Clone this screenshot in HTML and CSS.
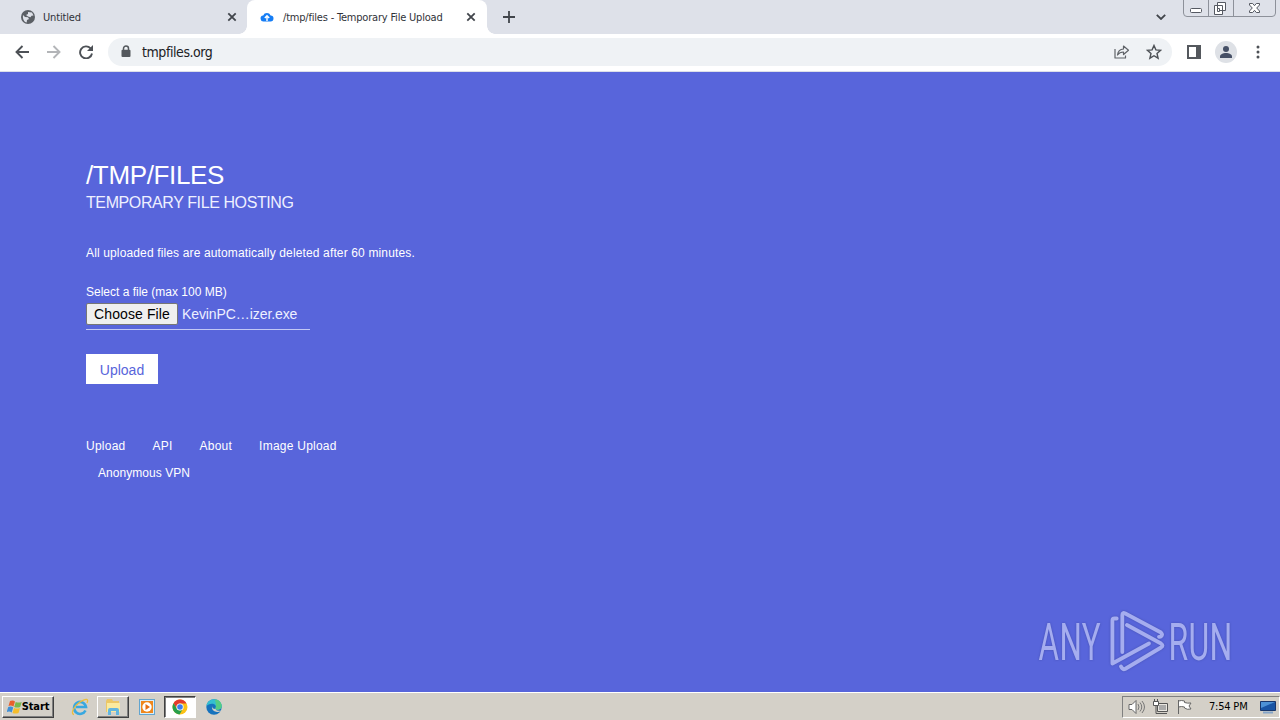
FILE: index.html
```html
<!doctype html>
<html lang="en">
<head>
	<meta charset="utf-8">
	<title>/tmp/files - Temporary File Upload</title>
	<link rel="stylesheet" href="styles.css">
</head>

<body>
	<div class="tabs">
		<div class="tab">
			<svg class="favicon" width="14" height="14" viewBox="0 0 14 14"><circle cx="7" cy="7" r="7" fill="#5b5f65"/><path d="M2 5l2 2 3 .3 1 1.7-2 1-.3 2.5C3 12 1.500 9 2 5zM7 2l4 .5 1.500 3-2 .2-1 1.500-2.500-.7L5 5l2-1z" fill="#dee1e9"/></svg>
			<span class="title title-untitled">Untitled</span>
			<svg class="close" width="10" height="10" viewBox="0 0 10 10"><path d="M1.300 1.300l7.400 7.400M8.700 1.300L1.300 8.700"/></svg>
		</div>
		<div class="tab active">
			<svg class="favicon" width="14" height="14" viewBox="0 0 14 14"><path d="M4 11.500a3 3 0 0 1-.8-6 4 4 0 0 1 7.400 0 3 3 0 0 1-.2 6z" fill="#157df5"/><path d="M7 11V6M4.800 8L7 5.800 9.200 8" fill="none" stroke="#fff" stroke-width="1.400"/></svg>
			<span class="title">/tmp/files - Temporary File Upload</span>
			<svg class="close" width="10" height="10" viewBox="0 0 10 10"><path d="M1.300 1.300l7.400 7.400M8.700 1.300L1.300 8.700"/></svg>
		</div>
		<svg class="plus" width="12" height="12" viewBox="0 0 12 12"><path d="M6 0v12M0 6h12"/></svg>
		<svg class="chevron" width="10" height="6" viewBox="0 0 10 6"><path d="M.8.800L5 5 9.200.8"/></svg>
		<svg class="controls" width="93" height="17" viewBox="0 0 93 17">
			<path d="M.5 0v13q0 3.500 3.500 3.500h85q3.500 0 3.500-3.500V0M25.500 0v16.500M50.500 0v16.500" fill="none" stroke="#8d919a"/>
			<g fill="#fff" stroke="#555962">
				<rect x="7.500" y="8.500" width="11" height="4" rx="1"/>
				<path d="M34.500 2.500h8v8h-8zM31.500 5.500h8v9h-8z"/>
				<path d="M34.500 8.500h2v3h-2z"/>
				<path d="M66.500 3.500h3.200l1.800 2.200 1.800-2.200h3.200v1.500L73.700 8l2.800 3v1.500h-3.200l-1.800-2.200-1.800 2.200h-3.200V11l2.800-3-2.800-3z"/>
			</g>
		</svg>
	</div>

	<div class="toolbar">
		<svg class="nav" width="14" height="14" viewBox="0 0 14 14"><path d="M14 7H1.500M7.500 1l-6 6 6 6"/></svg>
		<svg class="nav disabled" width="14" height="14" viewBox="0 0 14 14"><path d="M0 7h12.500M6.500 1l6 6-6 6"/></svg>
		<svg class="nav" width="14" height="14" viewBox="0 0 14 14"><path d="M11.600 3.400A6 6 0 1 0 13 8.500"/><path d="M14 0v6H8z" fill="#4d5156" stroke="none"/></svg>
		<div class="omnibox">
			<svg class="lock" width="10" height="13" viewBox="0 0 10 13"><path d="M2.500 6V3.500a2.500 2.500 0 0 1 5 0V6" fill="none" stroke="#54585d" stroke-width="1.500"/><rect x=".5" y="4.700" width="9" height="7.300" rx="1" fill="#54585d"/></svg>
			<span class="url">tmpfiles.org</span>
			<svg class="share" width="16" height="14" viewBox="0 0 16 14"><path d="M1 4v9h10.500v-2.500M3.500 10c.5-4 2.500-5.800 6-6V1l5 4.200-5 4.300V7C7 7 5 7.800 3.500 10z" fill="none" stroke="#5f6368" stroke-width="1.200" stroke-linejoin="round"/></svg>
			<svg class="star" width="16" height="16" viewBox="0 0 16 16"><path d="M8 1.500l1.900 4.400 4.700.4-3.600 3.200 1.100 4.700L8 11.700l-4.100 2.500L5 9.500 1.400 6.300l4.700-.4z" fill="none" stroke="#4d5156" stroke-width="1.400"/></svg>
		</div>
		<svg class="panel" width="14" height="14" viewBox="0 0 14 14"><path d="M1 1h12v12H1z" fill="none" stroke="#54585d" stroke-width="2"/><path d="M9 0h5v14H9z" fill="#54585d"/></svg>
		<svg class="avatar" width="22" height="22" viewBox="0 0 22 22"><circle cx="11" cy="11" r="11" fill="#dee1e6"/><circle cx="11" cy="8" r="3" fill="#465066"/><path d="M5 17v-1.500c0-2.300 3-3.500 6-3.500s6 1.200 6 3.500V17z" fill="#465066"/></svg>
		<svg class="dots" width="4" height="14" viewBox="0 0 4 14"><circle cx="2" cy="2" r="1.500"/><circle cx="2" cy="7" r="1.500"/><circle cx="2" cy="12" r="1.500"/></svg>
	</div>

	<div class="page">
		<h1>/TMP/FILES</h1>
		<h2>TEMPORARY FILE HOSTING</h2>
		<p class="info">All uploaded files are automatically deleted after 60 minutes.</p>
		<label class="label">Select a file (max 100 MB)</label>
		<div class="file">
			<button class="choose">Choose File</button>
			<span class="filename">KevinPC…izer.exe</span>
		</div>
		<button class="upload">Upload</button>
		<div class="links">
			<a>Upload</a>
			<a>API</a>
			<a>About</a>
			<a>Image Upload</a>
		</div>
		<div class="links second">
			<a>Anonymous VPN</a>
		</div>
		<svg class="watermark" width="240" height="76" viewBox="1035 602 240 76">
			<g class="wm-text">
				<text transform="translate(1038.500 659.500) scale(.61 1)" textLength="102">ANY</text>
				<text transform="translate(1168.500 659.500) scale(.62 1)" textLength="103">RUN</text>
			</g>
			<g class="wm-play">
				<path d="M1116.700 618.500h-2.300q-2 0-2 2V663.500L1149 643.500"/>
				<path d="M1122.300 652V615q0-3 3-1.500L1161 632.500q2 2 0 4l-2 .3"/>
				<path d="M1127 625l34 18.500q3 2 0 4L1125 669q-2 1-4-2.500"/>
			</g>
		</svg>
	</div>

	<div class="taskbar">
		<div class="start">
			<svg width="16" height="16" viewBox="0 0 16 16"><path d="M3 2q3-1 5 .5L6.500 7.500Q4 6 1.500 7z" fill="#e8602c"/><path d="M8.700 3q3 1.200 6 0l-1.500 5q-3 1-6 0z" fill="#78b94b"/><path d="M1.200 8q3-1 5 .5L4.700 13.500q-2-1.500-5-.5z" fill="#3f8fd6"/><path d="M7 9q3 1.200 6 0l-1.500 5q-3 1-6 0z" fill="#f5bd2b"/></svg>
			<span>Start</span>
		</div>
		<svg class="ie" width="18" height="18" viewBox="0 0 18 18"><path d="M14.500 12.500A6 6 0 1 1 15 9H5" fill="none" stroke="#38a8e0" stroke-width="2.600"/><path d="M3 16.500C-1 16 3 8 9 4s9-3.500 7 1" fill="none" stroke="#edbd3c" stroke-width="1.300"/></svg>
		<div class="task explorer">
			<svg width="18" height="18" viewBox="0 0 18 18"><path d="M2 3l1-2h5l1 2h6v11H2z" fill="#ecc766"/><path d="M3 5h13v9H3z" fill="#faea9f"/><path d="M4 17v-5q0-2 2-2h7q2 0 2 2v5h-3v-4H7v4z" fill="#62b5df"/></svg>
		</div>
		<svg class="media" width="16" height="16" viewBox="0 0 16 16"><rect x=".5" y=".5" width="15" height="15" fill="#d9eefa" stroke="#62a5d0"/><rect x="2" y="2" width="12" height="12" fill="#ef871d"/><circle cx="8" cy="8" r="4.700" fill="#fff"/><path d="M6.500 5l4.500 3-4.500 3z" fill="#e56e13"/></svg>
		<div class="task pressed">
			<svg width="16" height="16" viewBox="0 0 16 16"><circle cx="8" cy="8" r="7.500" fill="#fbc116"/><path d="M1.500 4.200A7.500 7.500 0 0 1 14.500 4.500H8a3.500 3.500 0 0 0-3 5.200z" fill="#e23b2e"/><path d="M1.500 4.200A7.500 7.500 0 0 0 7.500 15.500L11 9.800a3.500 3.500 0 0 1-6 0z" fill="#279f4b"/><circle cx="8" cy="8" r="3.600" fill="#fff"/><circle cx="8" cy="8" r="2.800" fill="#3b7ded"/></svg>
		</div>
		<svg class="edge" width="16" height="16" viewBox="0 0 16 16"><circle cx="8" cy="8" r="7.700" fill="#1672bd"/><path d="M.5 7C1 2.500 4.500.3 8 .3c5 0 7.700 3.500 7.700 6.500 0 3-2.300 4-4.200 4-2 0-2.500-.8-2-1.500C10.700 7 9 4.800 6 4.800 3.500 4.800 1.500 6 .5 7z" fill="#35bfd0"/><path d="M9 .4c4 0 6.700 3.400 6.700 6.400 0 3-2.300 4-4.200 4-2 0-2.500-.8-2-1.500C10.800 7 9.500 4 9 .4z" fill="#55cc85"/><path d="M6 7q-1 5 5 6 2 .3 4-1.500-4 1.200-5.500-1.500Q6 10 6 7z" fill="#d4d0c8"/></svg>
		<div class="tray">
			<svg class="sound" width="17" height="16" viewBox="0 0 17 16"><path d="M1 5.500h3l4-4v13l-4-4H1z" fill="#fff" stroke="#666"/><path d="M10 5q2 3 0 6M12 3.500q3.500 4.500 0 9M14 2q5 6 0 12" fill="none" stroke="#777"/></svg>
			<svg class="network" width="17" height="16" viewBox="0 0 17 16"><path d="M5.500 4.500h10v8h-10zM7 14.500h8" fill="#e8e6e0" stroke="#555"/><path d="M7 6h7v5H7z" fill="#aaa"/><path d="M1.500 2.500h5v4h-5zM2.500 0v2M5.500 0v2" fill="#fff" stroke="#555"/><path d="M4 6.500v8h4" fill="none" stroke="#555"/></svg>
			<svg class="flag" width="17" height="16" viewBox="0 0 17 16"><path d="M2.500 15V1M2.500 2q3-1 6 0v1.500q3 1 6.500.5l-2 3 2 3q-4 1-6.500-1V8q-3-1-6 0z" fill="#fff" stroke="#666"/></svg>
			<span class="clock">7:54 PM</span>
			<svg class="desktop" width="16" height="14" viewBox="0 0 16 14"><path d="M.5 1.500h15v9H.5z" fill="#1854a4" stroke="#18366b"/><path d="M1 2h14L1 8z" fill="#4c91d5"/><path d="M3 12.500h10" stroke="#84a4c8" stroke-width="2"/></svg>
		</div>
	</div>
</body>
</html>
```
FILE: styles.css
```css
html,body{
	margin: 0;
	padding: 0;
}
body{
	display: flex;
	flex-direction: column;
	height: 720px;
	overflow: hidden;
	font-family: "Liberation Sans", sans-serif;
}
svg{
	display: block;
	flex-shrink: 0;
}

/* tab strip */
.tabs{
	display: flex;
	height: 34px;
	background: #dee1e9;
}
.tab{
	display: flex;
	align-items: center;
	box-sizing: border-box;
	width: 247px;
	height: 34px;
	padding: 0 10px 0 21px;
}
.tab.active{
	position: relative;
	width: 240px;
	padding: 0 11px 0 13px;
	background: #fff;
	border-radius: 8px 8px 0 0;
}
.tab.active:before,
.tab.active:after{
	content: "";
	position: absolute;
	bottom: 0;
	width: 8px;
	height: 8px;
}
.tab.active:before{
	left: -8px;
	background: radial-gradient(circle at 0 0, transparent 7.5px, #fff 8px);
}
.tab.active:after{
	right: -8px;
	background: radial-gradient(circle at 100% 0, transparent 7.5px, #fff 8px);
}
.title{
	margin-left: 8px;
	font-family: "DejaVu Sans Condensed", "DejaVu Sans", sans-serif;
	font-stretch: condensed;
	font-size: 11px;
	letter-spacing: -.2px;
	white-space: nowrap;
	color: #303238;
}
.title-untitled{
	letter-spacing: -.15px;
}
.active .title{
	margin-left: 9px;
}
.close{
	margin-left: auto;
}
.close path,
.plus path,
.chevron path{
	fill: none;
	stroke: #41454b;
	stroke-width: 1.8;
}
.plus{
	margin: 11px 0 0 16px;
}
.chevron{
	margin: 14px 17px 0 auto;
}
.controls{
	margin-right: 4px;
}

/* address bar */
.toolbar{
	display: flex;
	align-items: center;
	box-sizing: border-box;
	height: 38px;
	padding: 0 20px 2px 15px;
	background: #fff;
	border-bottom: 1px solid #dcdfe8;
}
.nav{
	margin-right: 18px;
	fill: none;
	stroke: #4d5156;
	stroke-width: 1.9;
}
.nav.disabled{
	stroke: #b3b5b8;
}
.nav + .omnibox{
	margin-left: -3px;
}
.omnibox{
	display: flex;
	align-items: center;
	box-sizing: border-box;
	width: 1064px;
	height: 28px;
	padding: 0 10px 0 13px;
	border-radius: 14px;
	background: #eff2f5;
}
.url{
	margin-left: 11px;
	padding-top: 1px;
	font-family: "DejaVu Sans Condensed", "DejaVu Sans", sans-serif;
	font-stretch: condensed;
	font-size: 14px;
	letter-spacing: -.43px;
	color: #202124;
}
.share{
	margin-left: auto;
}
.star{
	margin-left: 16px;
}
.panel{
	margin-left: 15px;
}
.avatar{
	margin-left: 14px;
}
.dots{
	margin-left: auto;
	fill: #4d5156;
}

/* page */
.page{
	position: relative;
	box-sizing: border-box;
	height: 620px;
	padding: 88px 86px 0;
	background: #5865db;
	color: #fff;
}
h1,h2,p{
	margin: 0;
	font-weight: normal;
	white-space: nowrap;
}
h1{
	font-size: 26px;
	line-height: 30px;
	letter-spacing: -.35px;
}
h2{
	padding-top: 1px;
	font-size: 16px;
	line-height: 24px;
	letter-spacing: -.4px;
	color: #eef0ff;
}
.info{
	margin-top: 30px;
	font-size: 12px;
	line-height: 16px;
	letter-spacing: .14px;
}
.label{
	display: block;
	margin-top: 23px;
	font-size: 12px;
	line-height: 16px;
}
.file{
	display: flex;
	align-items: center;
	box-sizing: border-box;
	width: 224px;
	height: 30px;
	padding-bottom: 2px;
	border-bottom: 1px solid #c3c8f5;
}
.choose{
	box-sizing: border-box;
	width: 92px;
	height: 22px;
	padding: 0;
	border: 1px solid #767676;
	border-radius: 2px;
	background: #efefef;
	font: 14px "Liberation Sans", sans-serif;
	letter-spacing: .1px;
	color: #000;
}
.filename{
	margin-left: 4px;
	font-size: 14px;
	letter-spacing: -.09px;
	color: #eef0ff;
}
.upload{
	display: block;
	width: 72px;
	height: 30px;
	margin-top: 24px;
	padding: 2px 0 0;
	border: 0;
	background: #fff;
	font: 14px "Liberation Sans", sans-serif;
	color: #5865db;
}
.links{
	display: flex;
	margin-top: 54px;
	font-size: 12px;
	line-height: 16px;
	letter-spacing: .24px;
}
.links a{
	margin-right: 27px;
}
.links.second{
	margin-top: 11px;
	padding-left: 12px;
	letter-spacing: .05px;
}

.watermark{
	position: absolute;
	right: 5px;
	bottom: 14px;
}
.wm-text{
	font-family: Roboto, sans-serif;
	font-size: 51.5px;
	fill: #a5adef;
	filter: drop-shadow(0 0 1px rgba(50,60,140,.5));
}
.wm-play{
	fill: none;
	stroke: #a5adef;
	stroke-width: 3.8;
	stroke-linecap: round;
	stroke-linejoin: round;
	filter: drop-shadow(0 0 1px rgba(50,60,140,.5));
}

/* taskbar */
.taskbar{
	display: flex;
	align-items: center;
	box-sizing: border-box;
	height: 28px;
	padding: 0 0 0 2px;
	background: #d4d0c8;
	border-top: 1px solid #fff;
}
.start,
.task{
	display: flex;
	align-items: center;
	justify-content: center;
	box-sizing: border-box;
	height: 22px;
	border: 1px solid;
	border-color: #fff #404040 #404040 #fff;
	box-shadow: inset -1px -1px #808080;
}
.start{
	width: 52px;
	font-family: "DejaVu Sans Condensed", "DejaVu Sans", sans-serif;
	font-stretch: condensed;
	font-size: 11px;
	font-weight: bold;
	letter-spacing: -.1px;
}
.start span{
	margin-left: -1px;
}
.ie{
	margin-left: 17px;
}
.explorer{
	width: 32px;
	margin-left: 8px;
}
.media{
	margin-left: 10px;
}
.pressed{
	width: 32px;
	margin-left: 9px;
	background: #fff;
	border-color: #404040 #fff #fff #404040;
	box-shadow: inset 1px 1px #808080;
}
.edge{
	margin-left: 10px;
}
.tray{
	display: flex;
	align-items: center;
	box-sizing: border-box;
	width: 158px;
	height: 22px;
	margin-left: auto;
	padding-left: 5px;
	border: 1px solid;
	border-color: #808080 #fff #fff #808080;
}
.network,
.flag{
	margin-left: 7px;
}
.clock{
	margin-left: 16px;
	font-family: "DejaVu Sans Condensed", "DejaVu Sans", sans-serif;
	font-stretch: condensed;
	font-size: 11px;
	letter-spacing: -.2px;
	white-space: nowrap;
}
.desktop{
	margin-left: auto;
	margin-right: 3px;
}
```
